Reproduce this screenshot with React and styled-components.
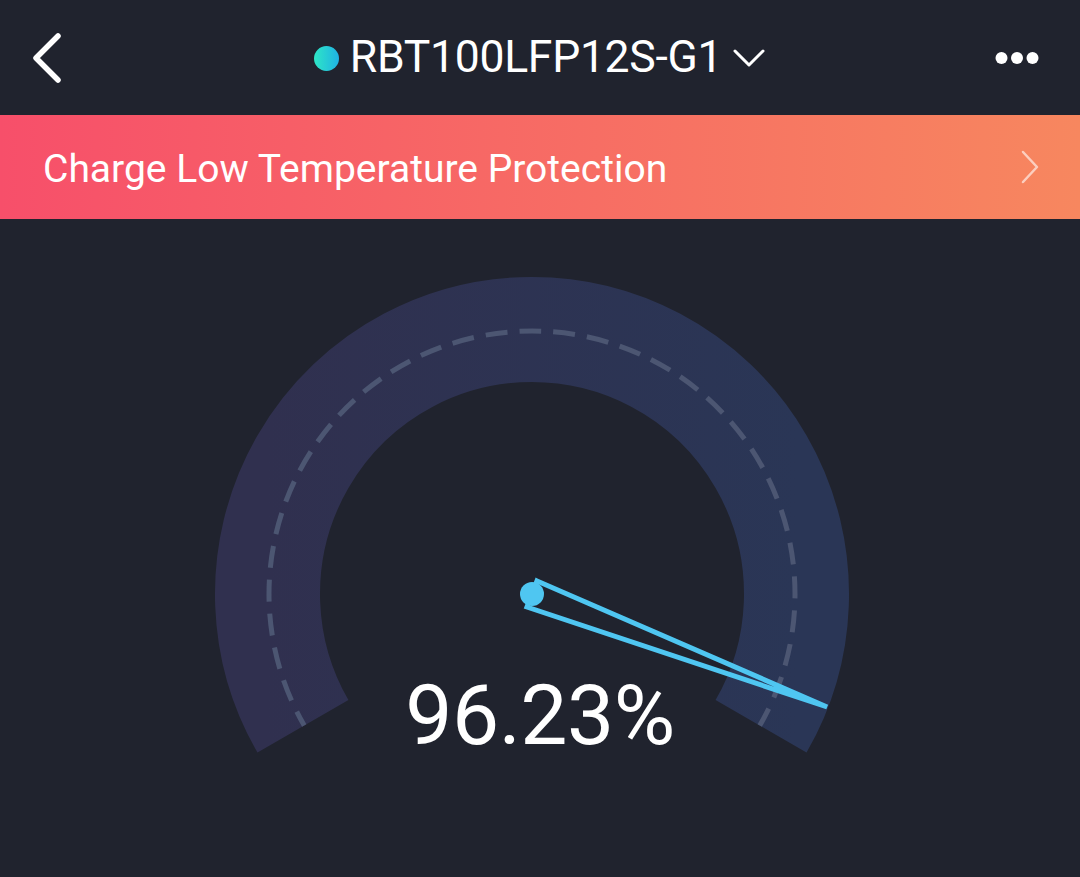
import styled, { createGlobalStyle } from "styled-components"

const Global = createGlobalStyle`
  html, body {
    margin: 0;
    padding: 0;
    background: #20232e;
  }
  body {
    font-family: Roboto, "Liberation Sans", sans-serif;
    color: #fff;
  }
`

const Page = styled.div`
  width: 1080px;
  height: 877px;
  background: #20232e;
  overflow: hidden;
`

const Header = styled.header`
  height: 115px;
  display: grid;
  grid-template-columns: 120px 1fr 120px;
  align-items: center;
`

const IconBtn = styled.div`
  display: flex;
  align-items: center;
  justify-content: ${(p) => (p.$right ? "flex-end" : "flex-start")};
  padding: ${(p) => (p.$right ? "0 41px 0 0" : "0 0 0 31px")};
  height: 100%;
`

const Title = styled.div`
  display: flex;
  align-items: center;
  justify-content: center;
`

const Dot = styled.span`
  width: 25px;
  height: 25px;
  border-radius: 50%;
  background: linear-gradient(90deg, #2ee6c6, #1fb2e4);
  margin-right: 11px;
  margin-top: 1px;
`

const Name = styled.span`
  font-size: 44.5px;
  letter-spacing: -0.3px;
  line-height: 1;
  color: #fff;
`

const Banner = styled.div`
  height: 104px;
  background: linear-gradient(90deg, #f74f6a 0%, #f7875f 100%);
  display: flex;
  align-items: center;
  justify-content: space-between;
  padding: 0 40px 0 43px;
`

const BannerText = styled.span`
  font-size: 39px;
  color: #fff;
  margin-top: 4px;
`

const GaugeWrap = styled.div`
  position: relative;
  width: 700px;
  height: 520px;
  margin: 43px auto 0;
`

const Value = styled.div`
  position: absolute;
  left: 0;
  right: 0;
  top: 412px;
  text-align: center;
  font-size: 84px;
  line-height: 1;
  color: #fff;
  letter-spacing: -0.5px;
`

const CX = 342
const CY = 332

const polar = (r, deg) => {
  const a = (deg * Math.PI) / 180
  return [CX + r * Math.cos(a), CY + r * Math.sin(a)]
}

// screen angles: 150deg = lower left, 30deg = lower right, sweeping over the top
const arcPath = (r) => {
  const [x1, y1] = polar(r, 150)
  const [x2, y2] = polar(r, 30)
  return `M ${x1} ${y1} A ${r} ${r} 0 1 1 ${x2} ${y2}`
}

const Gauge = ({ value }) => {
  const deg = 150 + (240 * value) / 100
  const a = (deg * Math.PI) / 180
  const tip = polar(316, deg)
  const px = -Math.sin(a)
  const py = Math.cos(a)
  const b1 = [CX - 14 * px, CY - 14 * py]
  const b2 = [CX + 14 * px, CY + 14 * py]
  return (
    <svg width="700" height="520" viewBox="0 0 700 520">
      <defs>
        <linearGradient id="band" x1="0" y1="0" x2="1" y2="0">
          <stop offset="0" stopColor="#30304f" />
          <stop offset="1" stopColor="#2a3656" />
        </linearGradient>
      </defs>
      <path d={arcPath(264.5)} fill="none" stroke="url(#band)" strokeWidth="105" />
      <path
        d={arcPath(263)}
        fill="none"
        stroke="#4c5672"
        strokeWidth="5"
        strokeDasharray="22 12"
        strokeDashoffset="6"
      />
      <polygon
        points={`${b1[0]},${b1[1]} ${tip[0]},${tip[1]} ${b2[0]},${b2[1]}`}
        fill="none"
        stroke="#4fc6f1"
        strokeWidth="5"
        strokeLinejoin="miter"
      />
      <circle cx={CX} cy={CY} r="12" fill="#4fc6f1" />
    </svg>
  )
}

const App = () => {
  return (
    <Page>
      <Global />
      <Header>
        <IconBtn>
          <svg width="34" height="52" viewBox="0 0 34 52">
            <polyline points="27,4 5,26 27,48" fill="none" stroke="#fff" strokeWidth="5.5" strokeLinecap="round" strokeLinejoin="round" />
          </svg>
        </IconBtn>
        <Title>
          <Dot />
          <Name>RBT100LFP12S-G1</Name>
          <svg width="34" height="22" viewBox="0 0 34 22" style={{ marginLeft: 10 }}>
            <polyline points="3,4 17,18 31,4" fill="none" stroke="#fff" strokeWidth="3" strokeLinecap="round" strokeLinejoin="round" />
          </svg>
        </Title>
        <IconBtn $right>
          <svg width="44" height="14" viewBox="0 0 44 14">
            <circle cx="6.5" cy="7" r="6" fill="#fff" />
            <circle cx="22" cy="7" r="6" fill="#fff" />
            <circle cx="37.5" cy="7" r="6" fill="#fff" />
          </svg>
        </IconBtn>
      </Header>
      <Banner>
        <BannerText>Charge Low Temperature Protection</BannerText>
        <svg width="20" height="34" viewBox="0 0 20 34">
          <polyline points="3,2 17,17 3,32" fill="none" stroke="rgba(255,255,255,0.6)" strokeWidth="2.5" strokeLinecap="round" strokeLinejoin="round" />
        </svg>
      </Banner>
      <GaugeWrap>
        <Gauge value={96.23} />
        <Value>96.23%</Value>
      </GaugeWrap>
    </Page>
  )
}

export default App
